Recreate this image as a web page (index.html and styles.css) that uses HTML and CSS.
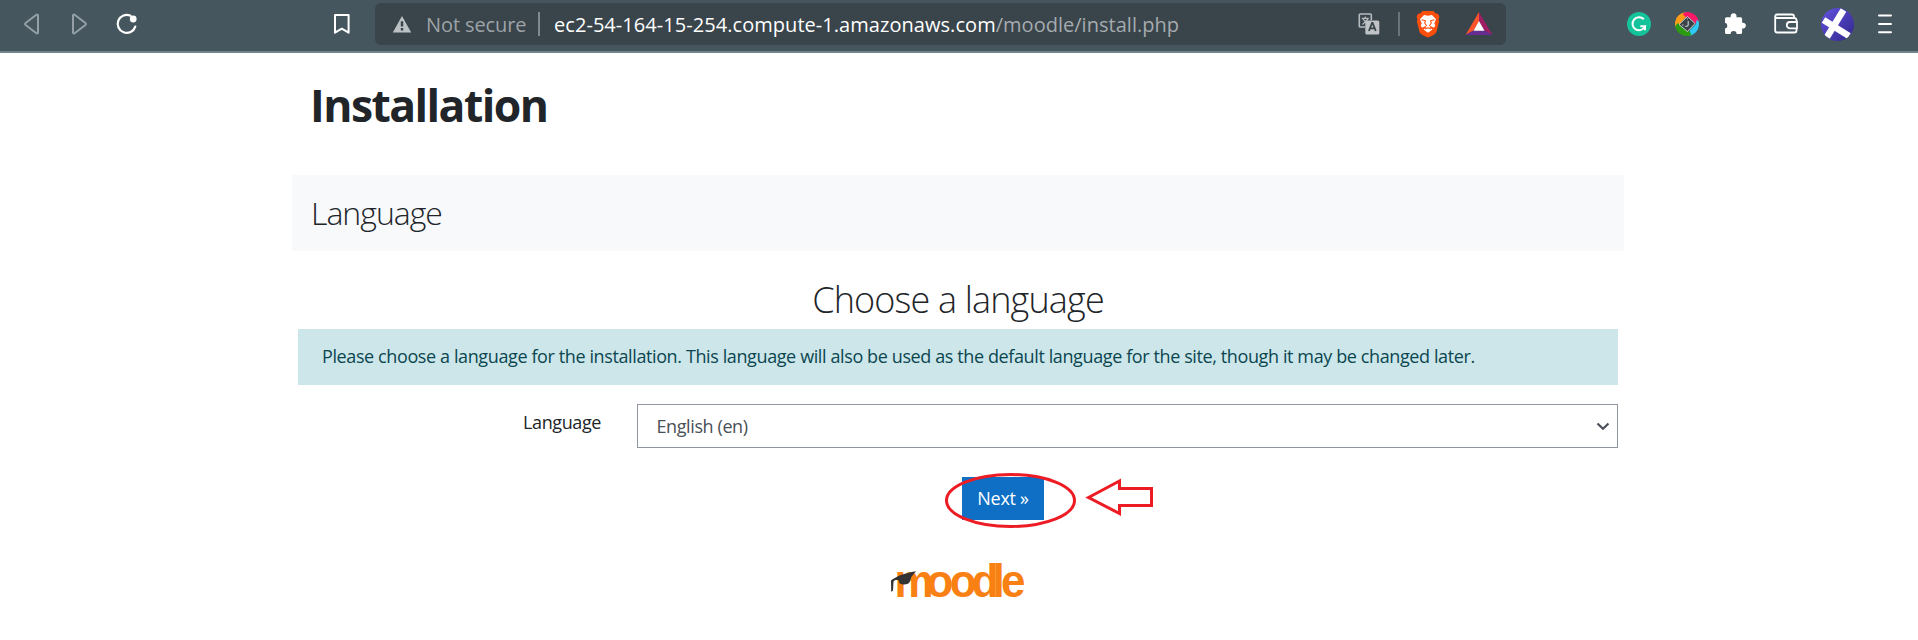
FILE: index.html
```html
<!DOCTYPE html>
<html lang="en">
<head>
<meta charset="utf-8">
<title>Installation</title>
<link rel="stylesheet" href="styles.css">
</head>
<body>
<header class="toolbar">
  <nav class="nav">
    <svg class="dim" width="20" height="24" viewBox="0 0 20 24"><path d="M16 3.400v17a1 1 0 0 1-1.600.8L3.600 13a1.300 1.300 0 0 1 0-2L14.400 2.800A1 1 0 0 1 16 3.400z"/></svg>
    <svg class="dim" width="20" height="24" viewBox="0 0 20 24"><path d="M3 3.400v17a1 1 0 0 0 1.600.8L15.400 13a1.300 1.300 0 0 0 0-2L4.600 2.800A1 1 0 0 0 3 3.400z"/></svg>
    <svg class="reload" width="24" height="24" viewBox="0 0 24 24"><path d="M15.500 3.700A9 9 0 1 0 20.300 14.600"/><circle cx="18.200" cy="7" r="3.400"/></svg>
  </nav>
  <svg class="bookmark" width="20" height="24" viewBox="0 0 20 24"><path d="M3 3h13.600v17.700l-6.800-4-6.800 4z"/></svg>
  <div class="address">
    <svg class="warn" width="20" height="18" viewBox="0 0 20 18"><path fill="#bcc1c4" d="M10 1l9.200 16.500H.8z"/><path stroke="#39444b" stroke-width="2.400" d="M10 6.300v5.200M10 13v2.400"/></svg>
    <span class="insecure">Not secure</span>
    <i class="bar"></i>
    <span class="url"><span class="host">ec2-54-164-15-254.compute-1.amazonaws.com</span><span class="path">/moodle/install.php</span></span>
    <svg class="translate" width="22" height="22" viewBox="0 0 22 22"><path fill="none" stroke="#b6bbbe" stroke-width="1.600" d="M7 14H2.500A1 1 0 0 1 1.300 13V2A1 1 0 0 1 2.300 1h10A1 1 0 0 1 13.300 2v5"/><path fill="none" stroke="#b6bbbe" stroke-width="1.200" d="M3.800 5.300h7M7.300 3.500v2M5 6l5 5.500M10 6l-5.500 5.500"/><rect x="7.300" y="7.500" width="14" height="14" rx="1.500" fill="#bfc3c5"/><path fill="none" stroke="#39444b" stroke-width="1.800" d="M10.900 18l3.200-8h.5l3.200 8M12.200 15.400h4.300"/></svg>
    <i class="bar bar-dim"></i>
    <svg class="brave" width="24" height="28" viewBox="0 0 24 28"><path fill="#fb4f0b" d="M6.500 1h11l2.200 2.500 2.300.2 1.500 3.300-1 2.500.7 1.500-2.600 10.500c-.6 2.500-4.500 4.500-8.600 6-4.100-1.500-8-3.500-8.600-6L.8 11l.7-1.500-1-2.500L2 3.700l2.300-.2z"/><path fill="#fff" d="M8 5l4 .8L16 5l4 4.200-1.700 4.200 1 2.300-1.600 2-3-1.800-1.200 1.300 3 2.200-4.500 3.400-4.500-3.400 3-2.200-1.200-1.300-3 1.800-1.600-2 1-2.300L4 9.200z"/><path fill="none" stroke="#fb4f0b" stroke-width="1.100" d="M5.500 9.800l4 1L8.700 13l2 3M18.500 9.800l-4 1 .8 2.200-2 3M9 19l3-1.200 3 1.200"/></svg>
    <svg class="bat" width="28" height="24" viewBox="0 0 28 24"><path fill="#fb542b" d="M14 0v10L8.500 18.500.5 23z"/><path fill="#9e1f63" d="M14 0l13.500 23-8-4.500L14 10z"/><path fill="#662d91" d="M.5 23l8-4.500h11l8 4.500z"/><path fill="#fff" d="M14 9l5.500 9.700h-11z"/></svg>
  </div>
  <div class="extensions">
    <svg width="24" height="24" viewBox="0 0 24 24"><circle cx="12" cy="12" r="12" fill="#15c39a"/><path fill="none" stroke="#fff" stroke-width="2" d="M16.800 7.300A6.500 6.500 0 1 0 18 14.300h-4.700M18 14.300v4"/></svg>
    <svg width="24" height="24" viewBox="0 0 24 24"><defs><clipPath id="disc"><circle cx="12" cy="12" r="12"/></clipPath></defs><g clip-path="url(#disc)"><path fill="#ff9c18" d="M0 15V0h10l3 3-6 6-4 7z"/><path fill="#ff1768" d="M8 1L12 0h12v11l-3 1-5-5-7-3z"/><path fill="#2ccaf5" d="M21.500 8L24 9v15H14l1-6 6-6z"/><path fill="#2b9c12" d="M0 14l3-3 5 5 7 4 2 4H0z"/><path fill="#3b4248" stroke="#e8ecee" stroke-width=".8" d="M12.500 4.500l7.500 7-7.500 8-8.500-7z"/></g><path fill="none" stroke="#c2c8cb" stroke-width="1.200" d="M13.200 9v4a2 2 0 0 1-3 1M7 13h1.500M12 7h1"/></svg>
    <svg width="22" height="22" viewBox="0 0 22 22"><path fill="#fff" d="M2.500 4.300h4.300a3 3 0 1 1 5.600 0h4.200a1.500 1.500 0 0 1 1.500 1.500v4a2.900 2.900 0 1 1 0 5.500v4.200a1.500 1.500 0 0 1-1.500 1.500h-4a3 3 0 0 0-6 0H2.500A1.500 1.500 0 0 1 1 19.500v-4a2.900 2.900 0 0 0 0-5.700v-4a1.500 1.500 0 0 1 1.500-1.500z"/></svg>
    <svg width="24" height="22" viewBox="0 0 24 22"><path fill="none" stroke="#fff" stroke-width="1.800" d="M22.500 9V7A2 2 0 0 0 20.500 5H3A2 2 0 0 1 1.200 3.500C1.200 2 2 1.500 3 1.500h15a2 2 0 0 1 2 2V5M1.200 3.500V17.500a2 2 0 0 0 2 2h17.300a2 2 0 0 0 2-2V15.500M23 9h-7a3.200 3.200 0 0 0 0 6.400h7z"/></svg>
    <svg class="avatar" width="33" height="33" viewBox="0 0 33 33"><defs><linearGradient id="av" x2="1" y2="1"><stop stop-color="#6453df"/><stop offset="1" stop-color="#30268d"/></linearGradient><clipPath id="round"><circle cx="16.500" cy="16.500" r="16.500"/></clipPath></defs><circle cx="16.500" cy="16.500" r="16.500" fill="url(#av)"/><g clip-path="url(#round)" stroke="#fff"><path stroke-width="6.500" d="M2.500 12L28 28"/><path stroke-width="6.500" d="M22.500 2L6 29"/></g></svg>
    <svg width="14" height="20" viewBox="0 0 14 20"><path stroke="#fff" stroke-width="2" stroke-linecap="round" d="M1 1.500h12M1 10h12M1 18.300h12"/></svg>
  </div>
</header>
<main class="page">
  <h1>Installation</h1>
  <div class="stage">Language</div>
  <h2>Choose a language</h2>
  <div class="alert">Please choose a language for the installation. This language will also be used as the default language for the site, though it may be changed later.</div>
  <div class="row">
    <label class="label">Language</label>
    <div class="select"><span>English (en)</span>
      <svg width="14" height="9" viewBox="0 0 14 9"><path fill="none" stroke="#495057" stroke-width="2.200" d="M1.500 1.500L7 6.700l5.500-5.200"/></svg>
    </div>
  </div>
  <div class="actions">
    <button class="next">Next »</button>
    <svg class="marks" width="210" height="60" viewBox="945 470 210 60"><g fill="none" stroke="#ed1c24" stroke-width="3"><ellipse cx="1010.500" cy="500.500" rx="64" ry="26"/><path d="M1088.500 497.500l31-16.500v7.500h32v17h-32v8z"/></g></svg>
  </div>
  <footer class="footer">
    <svg width="150" height="66" viewBox="889 548 150 66"><g transform="translate(0 597) scale(1 1.040)"><text class="moodle" y="0" x="894.500 926.500 949.700 971.700 992.500 1001">moodle</text></g><path fill="#333" d="M891 580.500c5-4 13-7.500 25-9.300-2 2.500-4 4.500-5 6.500 0 2-1 4.500-3 6-4 1.500-7 .5-8.500-.5l-1-3c-2.500-.5-4.500 0-5 1.500l-.5 9-1.800 1z"/></svg>
  </footer>
</main>
</body>
</html>
```
FILE: styles.css
```css
* { box-sizing: border-box; }
body { margin: 0; background: #fff; color: #212529; font-family: "Open Sans", "Noto Sans", sans-serif; white-space: nowrap; overflow: hidden; }
svg { display: block; flex: none; }

.toolbar { height: 53px; display: flex; align-items: flex-start; background: #45565f; border-bottom: 2px solid #74848b; }
.nav { display: flex; gap: 28px; padding: 12px 0 0 22px; width: 332px; }
.dim path { fill: none; stroke: #94a0a5; stroke-width: 2; }
.reload { margin-left: -3px; }
.reload path { fill: none; stroke: #fff; stroke-width: 2.2; stroke-linecap: round; }
.reload circle { fill: #fff; }
.bookmark { margin-top: 12px; }
.bookmark path { fill: none; stroke: #fff; stroke-width: 2; stroke-linejoin: round; }
.address { width: 1131px; height: 42px; margin: 3px 0 0 23px; border-radius: 6px; background: #39444b; display: flex; align-items: center; font-size: 20px; line-height: 43px; }
.warn { margin-left: 17px; }
.insecure { width: 100px; margin-left: 14px; color: #9da3a7; letter-spacing: -.1px; }
.bar { width: 2px; height: 24px; margin-left: 12px; background: #81898d; flex: none; }
.bar-dim { margin-left: 18px; background: #697378; }
.url { flex: none; margin-left: 14px; width: 804px; color: #fff; }
.host { letter-spacing: .05px; }
.path { color: #a5abae; letter-spacing: .02px; }
.brave { margin-left: 16px; }
.bat { margin-left: 25px; }
.extensions { height: 48px; margin-left: 121px; display: flex; align-items: center; }
.extensions svg:nth-child(2) { margin-left: 24px; }
.extensions svg:nth-child(3) { margin-left: 25px; }
.extensions svg:nth-child(4) { margin-left: 28px; }
.extensions .avatar { margin-left: 23px; }
.extensions svg:nth-child(6) { margin-left: 24px; }

.page { width: 1332px; margin-left: 292px; padding-top: 25px; }
h1 { margin: 0 0 43px; padding-left: 18px; font-size: 44.500px; line-height: 54px; font-weight: 700; letter-spacing: -1.55px; }
.stage { height: 76px; padding-left: 19px; background: #f8f9fb; font-size: 32px; line-height: 76px; font-weight: 300; letter-spacing: -1px; }
h2 { margin: 27px 0 7px; text-align: center; font-size: 36px; line-height: 44px; font-weight: 300; letter-spacing: -.85px; }
.alert { height: 56px; margin: 0 6px; padding-left: 24px; background: #cce6ea; color: #0b4650; font-size: 18px; line-height: 55px; letter-spacing: -.39px; }
.row { display: flex; margin: 19px 6px 0; font-size: 18px; letter-spacing: -.4px; }
.label { width: 339px; padding: 4px 36px 0 0; text-align: right; line-height: 28px; }
.select { flex: 1; height: 44px; padding: 0 7px 0 18.500px; border: 1px solid #8f959e; color: #495057; display: flex; align-items: center; justify-content: space-between; line-height: 42px; }
.actions { position: relative; display: flex; justify-content: center; margin-top: 29px; padding-left: 90px; }
.next { width: 82px; height: 43px; padding: 0; border: 0; background: #0f6fc5; color: #fff; font: 18px/43px "Open Sans", sans-serif; letter-spacing: -.3px; }
.marks { position: absolute; left: 653px; top: -7px; }
.footer { margin: 28px 0 0 597px; }
.moodle { font: bold 44px "Liberation Sans", Arial, sans-serif; fill: #f98012; }
```
